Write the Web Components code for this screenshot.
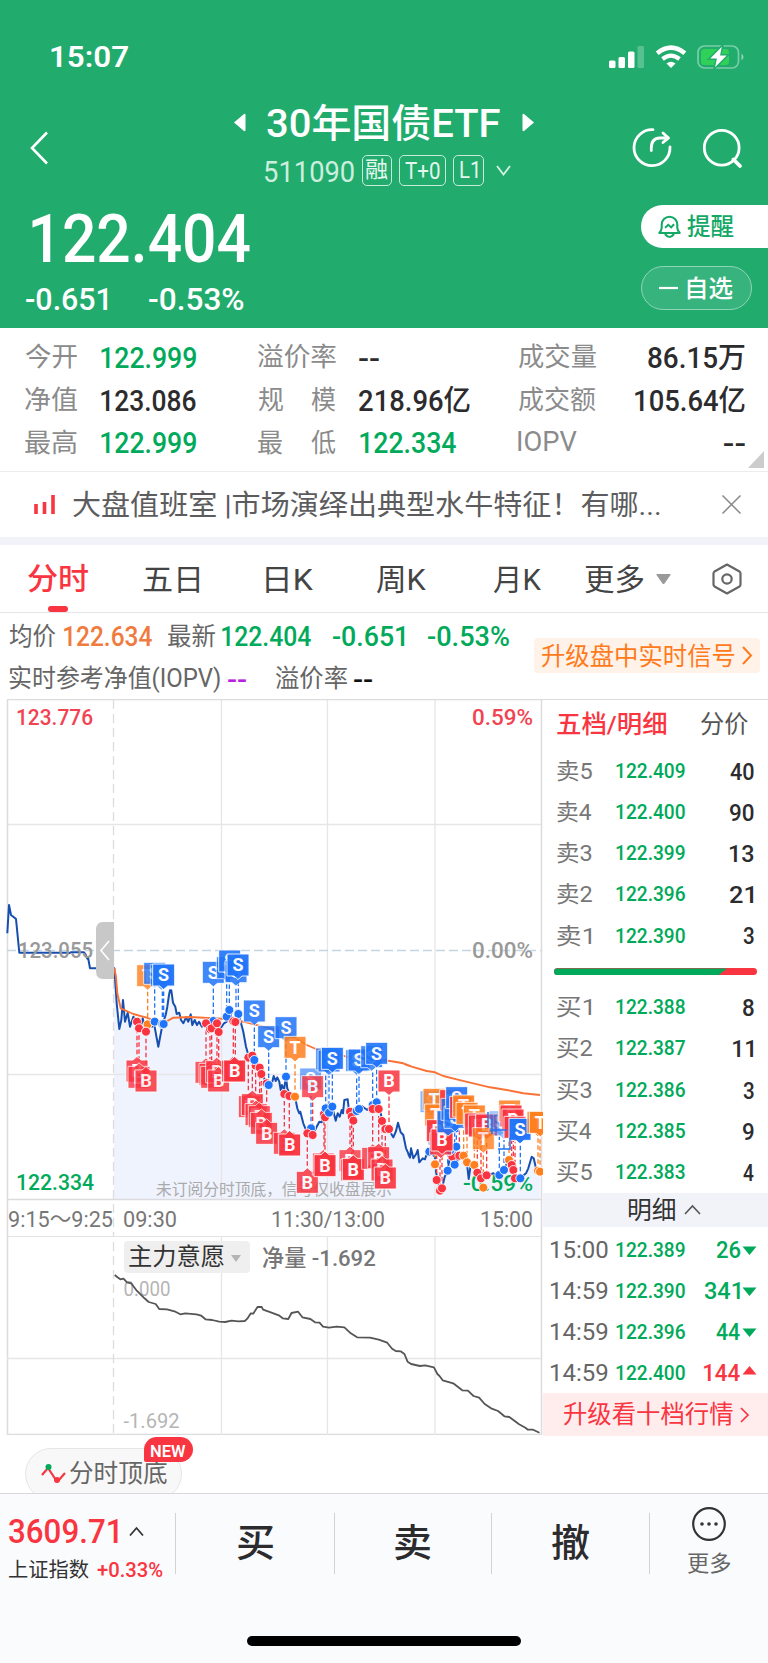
<!DOCTYPE html>
<html lang="zh-CN"><head><meta charset="utf-8"><title>30年国债ETF</title>
<style>html,body{margin:0;padding:0;background:#fff}body{width:768px;height:1663px;overflow:hidden;font-family:Roboto,"Noto Sans CJK SC",sans-serif}</style>
</head><body><quote-page></quote-page>
<script>
const FONT='Roboto, "Noto Sans CJK SC", sans-serif';
const ctx=document.createElement('canvas').getContext('2d');
const G='#00aa5a',R='#f93541',K='#2c2c2e',M='#666',L='#8b8b8b';
/* shorthand for a text with a set ink width: text, width, size, colour, gap before, weight, vertical nudge */
const T=(t,w,s,c='inherit',g=0,wt=400,dy=0)=>`<fit-text w="${w}" s="${s}" c="${c}" g="${g}" wt="${wt}" dy="${dy}">${t}</fit-text>`;
const svg=(w,h,body,g=0,extra='')=>`<svg width="${w}" height="${h}" viewBox="0 0 ${w} ${h}" fill="none" style="margin-left:${g}px;flex:none;overflow:visible;${extra}">${body}</svg>`;

customElements.define('fit-text',class extends HTMLElement{
  connectedCallback(){
    if(this.shadowRoot)return;
    const a=n=>this.getAttribute(n),t=this.textContent,s=+a('s'),w=+a('w'),wt=a('wt');
    ctx.font=`${wt} ${s}px ${FONT}`;
    const m=ctx.measureText(t),k=w/(m.actualBoundingBoxRight+m.actualBoundingBoxLeft);
    this.attachShadow({mode:'open'}).innerHTML=`<style>
      :host{display:block;flex:none;width:${w}px;height:${s}px;margin-left:${a('g')}px;color:${a('c')};white-space:nowrap}
      span{display:inline-block;font:${wt} ${s}px/${s}px ${FONT};transform-origin:0 50%;transform:translate(${m.actualBoundingBoxLeft*k}px,${a('dy')}px) scaleX(${k})}
      </style><span><slot></slot></span>`;
  }
});
const def=(name,css,html)=>customElements.define(name,class extends HTMLElement{
  connectedCallback(){
    if(this.shadowRoot)return;
    this.attachShadow({mode:'open'}).innerHTML=`<style>*{box-sizing:border-box}.r{display:flex;align-items:center}${css}</style>`+(typeof html==='function'?html(this):html);
  }
});

def('status-bar',':host{display:block;height:94px;padding-top:40px;color:#fff}.r{height:34px;padding-left:51px}',
`<div class="r">${T('15:07',77,30,'#fff',0,600)}
${svg(35,22,'<rect y="14.500" width="6.500" height="7.500" rx="1.500" fill="#fff"/><rect x="9.500" y="11" width="6.500" height="11" rx="1.500" fill="#fff"/><rect x="19" y="5.500" width="6.500" height="16.500" rx="1.500" fill="#fff"/><rect x="28.500" width="6.500" height="22" rx="1.500" fill="#fff" opacity=".25"/>',481)}
${svg(32,22,'<path d="M2.200 7.300Q16-4 29.800 7.300" stroke="#fff" stroke-width="4.700"/><path d="M7.500 13Q16 6.200 24.500 13" stroke="#fff" stroke-width="4.200"/><path d="M16 22l-4.500-4.500q4.500-3.500 9 0z" fill="#fff"/>',11)}
${svg(48,24,'<rect x="1" y="1" width="40.500" height="22" rx="6.500" stroke="#fff" stroke-opacity=".4" stroke-width="1.700"/><rect x="4" y="4" width="28" height="16" rx="3.500" fill="#30d158"/><path d="M44.500 8.500q4 3.500 0 7z" fill="#fff" opacity=".5"/><path d="M26-.5L11.500 14.300h7.500L16.800 24.500 31.500 9.700H24z" fill="#fff" stroke="#21ac6e" stroke-width="1.500"/>',10)}
</div>`);

def('title-bar',`:host{display:grid;grid-template-columns:230px 310px 1fr;height:106px;color:#fff}
.back{padding:37px 0 0 30px}.t{height:56px;padding-left:3px}.s{height:40px;padding-left:35px;margin-top:0}.b{display:flex;align-items:center;justify-content:center;height:31px;border:1.500px solid #c8eadb;border-radius:5px;margin-left:7px}.i{padding:34px 0 0 93px;display:flex;gap:32px}`,
`<div class="back">${svg(18,34,'<path d="M17 1.500L2 17l15 15.500" stroke="#fff" stroke-width="2.600"/>')}</div>
<div><div class="r t">${svg(13,19,'<path d="M1 9.500L11 1q1.500-.6 1.500 1v15q0 1.600-1.500 1z" fill="#fff"/>')}${T('30年国债ETF',233,39,'#fff',21,500,2)}${svg(13,19,'<path d="M12 9.500L2 1Q.5.400.5 2v15q0 1.600 1.500 1z" fill="#fff"/>',22)}</div>
<div class="r s">${T('511090',89,29,'#cdeede',0,400,2)}<div class="b" style="width:30px;margin-left:8px">${T('融',22,22,'#e4f6ed')}</div><div class="b" style="width:47px">${T('T+0',35,24,'#e4f6ed',0,400,1)}</div><div class="b" style="width:31px">${T('L1',18,23,'#e4f6ed')}</div>${svg(15,11,'<path d="M1 1l6.500 8.500L14 1" stroke="#d9f1e6" stroke-width="1.800"/>',12)}</div></div>
<div class="i">${svg(39,40,'<path d="M20 1.700A18 18 0 1 0 37 19" stroke="#fff" stroke-width="2.800" stroke-linecap="round"/><path d="M18.300 22.500V20Q18.300 10.200 27 10H34M30 5l5.500 5L30 14.500" stroke="#fff" stroke-width="2.800" stroke-linecap="round" stroke-linejoin="round"/>')}${svg(39,40,'<circle cx="17.700" cy="19.700" r="17.400" stroke="#fff" stroke-width="2.800"/><path d="M29.500 31.500l6.500 6.500" stroke="#fff" stroke-width="3.800" stroke-linecap="round"/>')}</div>`);

def('price-head',`:host{display:grid;grid-template-columns:1fr 127px;height:128px;color:#fff}.p{height:76px;padding-left:32px}.c{height:46px;padding-left:26px}
.btn{display:flex;align-items:center}.a{margin-top:5px;height:43px;background:#fff;border-radius:22px 0 0 22px;padding-left:17px}.z{margin-top:17.500px;width:110.500px;height:44px;border:1.500px solid #8fd4b5;background:#37b47d;border-radius:22px;padding-left:17px}`,
`<div><div class="r p">${T('122.404',218,67,'#fff',0,500,1)}</div><div class="r c">${T('-0.651',81,32,'#fff',0,500)}${T('-0.53%',95,32,'#fff',42,500)}</div></div>
<div><div class="btn a">${svg(23,24,'<path d="M1.300 18h20.400Q19.500 15.500 19.300 13V9.500a7.800 7.800 0 0 0-15.600 0V13Q3.500 15.500 1.300 18zM7 19q4.500 6 9 0" stroke="#14a866" stroke-width="2.100" stroke-linejoin="round"/><path d="M7 12.800l3.300-3 2.800 2.600 3-3.200" stroke="#14a866" stroke-width="2"/>')}${T('提醒',47,24,'#14a866',6,500)}</div>
<div class="btn z">${svg(19,4,'<path d="M0 2h19" stroke="#fff" stroke-width="2.200"/>')}${T('自选',46,24,'#fff',9,500,1)}</div></div>`);

def('stat-grid',`:host{display:block;height:143.500px;padding-top:8px;border-bottom:1.500px solid #ececee;position:relative}.r{height:42.700px;padding-left:25px}svg.c{position:absolute;right:4px;bottom:3px}`,
(()=>{const row=(a,v,c,l2,v2,l3,v3)=>`<div class="r">${T(a,52,26,L,0,400,-.5)}${T(v,95,29,c,24,500,1)}${l2}${v2}${l3}${v3}</div>`;
const l=(t,g)=>T(t,78,26,L,g,400,-.5),sp=(x,y)=>T(x,25,26,L,62,400,-.5)+T(y,25,26,L,28,400,-.5);
return row('今开','122.999',G,l('溢价率',62),T('--',20,29,K,23,500,2),l('成交量',139),T('86.15万',97,29,K,52,500,1))
+row('净值','123.086',K,sp('规','模'),T('218.96亿',111,29,K,23,500,1),l('成交额',48),T('105.64亿',110,29,K,39,500,1))
+row('最高','122.999',G,sp('最','低'),T('122.334',96,29,G,24,500,1),T('IOPV',59,28,L,62,400,-1),T('--',21,29,K,147,500,2))
+'<svg class="c" width="16" height="17"><path d="M16 0v17H0z" fill="#ccc"/></svg>'})());

def('news-line',`:host{display:flex;align-items:center;height:73.500px;border-bottom:8px solid #f2f3f8;padding-left:34px}`,
svg(21,19,'<path d="M2 9v10M10.500 7v12M19 0v19" stroke="#f93541" stroke-width="3.600"/>')+T('大盘值班室 |市场演绎出典型水牛特征！有哪...',587,28.5,'#5c5c5e',18,400,2)+svg(19,19,'<path d="M.5.500l18 18M18.500.500l-18 18" stroke="#8a8a8a" stroke-width="1.500"/>',62));

def('period-tabs',`:host{display:block;height:67.500px;border-bottom:1.500px solid #e6e6e8}.r{height:61px;padding:6px 0 0 28px}i{display:block;width:20px;height:6px;border-radius:3px;background:#f93541;margin-left:48px}`,
`<div class="r">${T('分时',60,30,R,0,500)}${T('五日',56,30,'#444',55,400,1)}${T('日K',47,30,'#444',67,400,1)}${T('周K',50,30,'#444',63,400,1)}${T('月K',48,30,'#444',67,400,1)}${T('更多',59,30,'#444',44,400,.5)}${svg(15,10,'<path d="M1 0h13q1 0 .5 1L8.500 9.500q-1 1-2 0L.5 1Q0 0 1 0z" fill="#999"/>',12)}${svg(30,32,'<path d="M15 1.500L27.500 8.500q1 .8 1 2v11q0 1.200-1 2L15 30.500 2.500 23.500q-1-.8-1-2v-11q0-1.200 1-2z" stroke="#666" stroke-width="2.200" stroke-linejoin="round"/><circle cx="15" cy="16" r="4.700" stroke="#666" stroke-width="2.200"/>',41)}</div><i></i>`);

def('quote-info',`:host{display:grid;grid-template-columns:534px 226px;height:86px}.a{height:47px;padding-left:9px}.b{height:36px;padding-left:9px}.u{align-self:start;margin-top:25px;height:35px;background:#fff3e9;border-radius:4px;padding-left:7px}`,
`<div><div class="r a">${T('均价',47,25,M)}${T('122.634',88,27,'#f07b3f',8,500,1)}${T('最新',47,25,M,16)}${T('122.404',89,27,G,7,500,1)}${T('-0.651',72,27,G,22,500,1)}${T('-0.53%',81,27,G,23,500,1)}</div>
<div class="r b">${T('实时参考净值(IOPV)',211,25,M,0,400,1)}${T('--',19,27,'#b91fe0',8,500,3)}${T('溢价率',72,25,M,28,400,1)}${T('--',19,27,'#111',7,500,3)}</div></div>
<div class="r u">${T('升级盘中实时信号',194,25,'#ff7a1c',0,400,1)}${svg(10,19,'<path d="M1 1l8 8.500L1 18" stroke="#ff7a1c" stroke-width="2"/>',7)}</div>`);

const flat=(ox,oy,a)=>a.trim().split(/\s+/).map(p=>{const[x,y]=p.split(',');return (ox+x/3).toFixed(1)+','+(oy+y/3).toFixed(1)}).join(' ');
const Z4=[0,880],Z5=[190,930],Z6=[390,1030],Z7=[420,1070];
const price=flat(...Z4,'343,265 350,370 358,447 364,420 369,360 375,425 383,398 390,440 400,410 412,425 420,450 428,415 437,455 445,425 456,440 462,430 475,500 488,430 497,405 502,380 507,345 510,331 514,331 519,368 526,380 530,402 538,398 543,420 550,430 558,412 565,425 572,403 577,435 584,420 591,435 597,425 606,440 612,425 625,430 640,425 650,442 660,448 672,430 680,425 690,395 696,420 708,408 718,410 730,455 738,500 748,535 757,525 770,550 785,580 795,600 806,615 812,618 817,605 821,588 827,603 832,592 838,605')+' '
+flat(...Z5,'272,480 276,465 282,480 288,440 292,475 300,495 315,500 322,535 328,550 331,545 340,580 348,600 362,600 370,612 380,590 388,575 395,577 402,555 415,550 427,530 437,572 443,550 449,560 455,540 459,550 463,510 473,508 476,535 484,550 490,572 500,545 515,528 532,540 545,522 552,540 560,510 568,530 577,572 587,590 600,605 610,622 618,603 624,578 632,607 640,615 648,655 655,670')+' '
+flat(...Z6,'55,372 60,383 63,355 70,385 78,373 83,360 88,397 98,385 105,388 108,378 120,367 135,380 138,425 143,450 150,482 156,475 164,440 172,425 180,380 190,350 200,395 210,378 218,383 227,398 232,410 236,447 242,405 252,405 260,425 268,448 278,430 290,437 310,430 325,437 345,410 358,392 368,420 375,440 390,445 408,430 415,415 425,380 431,385 438,415 450,425');
const avg=flat(...Z4,'343,265 348,290 352,340 362,385 400,402 440,413 470,425 500,424 520,413 570,411 680,417')+' '+flat(...Z5,'160,275 260,300 300,315 340,338 350,345 378,357 470,380 600,393 640,400 660,408')+' '+flat(...Z6,'45,103 65,110 110,123 135,127 160,138 200,148 250,160 300,172 350,180 400,190 450,195');
/* marker list: kind (D is a B flag that points down), flag centre, dot centre, opacity */
const marks=[[Z4,`T 443,287 443,433 .8|S 464,280 464,425 .8|S 484,287 487,432 .6|S 491,285 491,432 .95|S 640,277 640,423 .85|S 682,263 680,410 .8|S 689,243 688,390 .9|S 708,275 708,424 .85|S 714,255 715,402 .95
|B 411,573 411,425 .85|B 417,592 417,445 .8|B 438,603 438,455 .85|B 618,577 618,430 .8|B 630,583 630,447 .8|B 635,592 635,445 .8|B 650,575 651,430 .8|B 656,603 656,456 .85|B 698,573 700,424 .8|B 704,573 706,426 .95|B 748,680 745,533 .8|B 757,674 757,527 .85|B 768,704 767,557 .8|B 778,710 779,563 .8|B 784,730 784,582 .85|B 800,760 800,610 .85|S 763,393 763,540 .85|S 806,470 806,615 .85`],
[Z5,`S 288,293 288,440 .85|B 283,640 283,492 .8|B 299,645 298,498 .95|T 315,352 315,500 .85|S 362,447 363,595 .6|B 352,757 352,610 .85|D 368,470 368,615 .8|B 400,702 402,552 .8|B 405,707 405,562 .95|S 410,387 407,535 .8|S 417,393 417,548 .8|S 427,385 427,530 .95|B 480,692 480,545 .8|B 485,720 485,560 .8|B 490,718 490,572 .95|S 500,392 500,543 .8|S 507,390 507,537 .85|S 545,380 548,525 .8|S 560,370 560,517 .9|B 548,685 548,537 .8|B 566,683 566,537 .85|B 576,720 576,573 .85|B 586,744 586,597 .9|D 597,453 597,597 .85`],
[Z7,`S 33,95 28,245 .5|T 42,88 45,283 .85|T 47,135 45,283 .9|D 52,182 50,330 .9|D 62,222 60,362 .85|D 66,210 66,355 .97|D 92,92 97,260 .85|S 84,155 83,302 .9|S 96,118 90,242 .8|S 105,142 104,284 .85|S 110,83 109,230 .9|D 122,112 118,257 .9|T 131,108 131,257 .92|T 141,130 141,277 .9|T 163,138 163,285 .9|D 167,162 172,308 .9|D 178,168 183,325 .9|D 200,165 200,316 .92|T 190,206 190,353 .8|S 240,155 238,315 .4|S 252,165 252,300 .4|T 269,123 267,270 .85|D 273,138 275,285 .9|D 279,150 280,300 .9|D 285,172 285,325 .9|S 300,178 301,325 .97|T 354,157 354,302 .85|T 361,157 360,305 .92`]];
const mark=([o,s])=>{const list=s.split('|').map(e=>{const[k,b,d,al]=e.trim().split(' ');const[x,y]=b.split(',').map((v,i)=>o[i]+v/3),[p,q]=d.split(',').map((v,i)=>o[i]+v/3);return{k,x,y,p,q,al,c:k=='S'?'#1f74fa':k=='T'?'#ff7f1f':'#f9333f'}});
 return list.map(m=>`<path d="M${m.p} ${m.q}V${m.y+(m.k=='B'?-15:15)}" stroke="${m.c}" stroke-width="1.300" stroke-dasharray="4.500 2.500"/>`).join('')
 +list.map(m=>`<circle cx="${m.p}" cy="${m.q}" r="4.500" fill="${m.c}" stroke="#fff" stroke-width=".9"/>`).join('')
 +list.map(m=>{const up=m.k=='B';return `<g transform="translate(${m.x} ${m.y})" opacity="${m.al}"><path d="${up?'M-11-11H-4L0-14.500 4-11H11V11H-11Z':'M-11-11H11V11H4L0 14.500-4 11H-11Z'}" fill="${m.c}" stroke="#fff" stroke-width=".9"/><text text-anchor="middle" y="6.300" font-size="18" font-weight="700" fill="#fff">${m.k=='D'?'B':m.k}</text></g>`}).join('')};
const tx=(t,x,y,w,s,c,wt=500)=>`<text x="${x}" y="${y+s*.355}" textLength="${w}" lengthAdjust="spacingAndGlyphs" font-size="${s}" fill="${c}" font-weight="${wt}">${t}</text>`;

def('minute-chart',`:host{display:block;height:538px}svg{display:block;font-family:${FONT}}`,
()=>`<svg width="543" height="538" viewBox="0 699 543 538" fill="none">
<path d="M114 968L${price} 540,1199 114,1199Z" fill="#eff3fe"/>
<path d="M7 824.500H541M7 1074.500H541M221.500 700V1199M327.500 700V1199M435 700V1199" stroke="#e6e6e8" stroke-width="1.300"/>
<path d="M7 699.500H543M7.500 700V1237M541.500 700V1237M7 1199.500H541M7 1237H541" stroke="#dcdce0" stroke-width="1.500"/>
<path d="M113.500 700V1237" stroke="#ddd" stroke-width="1.300" stroke-dasharray="9 5"/><path d="M7 950.500H541" stroke="#c5d6e3" stroke-width="1.300" stroke-dasharray="9 4"/>
<polyline points="${flat(...Z4,'22,160 27,75 33,105 40,110 48,117 58,218 204,218 206,220 212,217 252,217 256,222 262,236 264,232 270,265 343,265')} ${price}" stroke="#174fb0" stroke-width="2" stroke-linejoin="round"/>
<polyline points="${avg}" stroke="#fa7236" stroke-width="1.900" stroke-linejoin="round"/>
<path d="M114 922V979H103Q96 979 96 971V930Q96 922 103 922Z" fill="#c8c8c8"/><path d="M109 941l-8 9.500 8 9.500" stroke="#fff" stroke-width="1.600"/>
${tx('未订阅分时顶底，信号仅收盘展示',156,1189,236,15.6,'#aaa',400)}
${tx('123.776',16,717.5,77,21.500,'#f24352')}${tx('0.59%',472,717.5,61,21.500,'#f24352')}${tx('123.055',18,950.500,75,21.500,'#999')}${tx('0.00%',472,950.500,61,21.500,'#999')}${tx('122.334',16,1182.500,78,21.500,G)}${tx('-0.59%',463,1183,70,22,G)}
${marks.map(mark).join('')}
<path d="M490.500 1130H507M492 1134V1115M498 1149H510V1138M488 1128V1112" stroke="#1f74fa" stroke-width="1.500"/>
${tx('9:15～9:25',8,1219.500,105,22.5,'#777',400)}${tx('09:30',123,1219.500,54,22.5,'#777',400)}${tx('11:30/13:00',271,1219.500,114,22.5,'#777',400)}${tx('15:00',480,1219.500,53,22.5,'#777',400)}
</svg>`);
const will='327,255 335,262 343,268 352,266 362,277 374,280 390,302 412,325 424,336 444,342 454,357 476,358 500,365 514,373 528,370 560,373 574,377 586,388 605,390 625,395 642,396 660,392 680,394 698,393 705,386 715,370 722,371 734,351 746,351 750,359 772,367 795,376 806,385 822,387 831,369 850,365 862,382 885,387 898,397 911,398 921,410 938,413 960,410 982,412 1000,430 1018,442 1055,443 1080,449 1104,458 1118,476 1128,483 1142,484 1153,492 1162,515 1172,522 1197,528 1212,526 1237,532 1247,552 1253,558 1262,571 1292,580 1318,601 1334,602 1350,618 1366,623 1382,642 1400,655 1420,663 1438,679 1452,681 1480,703 1498,713 1505,719 1520,719 1538,728'.split(' ').map(p=>{const[x,y]=p.split(',');return (x/2.851).toFixed(1)+','+(1190+y/3).toFixed(1)}).join(' ');
def('will-chart',`:host{display:grid;grid-template:198px/543px;height:198px}svg.g,.o{grid-area:1/1}svg.g{display:block;font-family:${FONT}}.o{display:flex;align-items:flex-start;padding:4.500px 0 0 124px}.k{width:126px;height:32px;background:#efefef;border-radius:4px;padding-left:5px}.v{height:32px}`,
`<svg class="g" width="543" height="198" viewBox="0 1237 543 198" fill="none"><path d="M7.500 1237V1435M541.500 1237V1435M7 1434.500H542" stroke="#dcdce0" stroke-width="1.500"/><path d="M7 1358.500H541M221.500 1237V1435M327.500 1237V1435M435 1237V1435" stroke="#e6e6e8" stroke-width="1.300"/><path d="M113.500 1242V1435" stroke="#ddd" stroke-width="1.300" stroke-dasharray="9 5"/>
${tx('0.000',123.5,1289,47,20,'#b5b5b5',400)}${tx('-1.692',123.5,1420.500,56,20,'#b5b5b5',400)}<polyline points="${will}" stroke="#555" stroke-width="1.800" stroke-linejoin="round"/></svg>
<div class="o"><div class="r k">${T('主力意愿',95,24,'#333')}${svg(10,7,'<path d="M0 0h10L5 7z" fill="#b5b5b5"/>',7,'margin-top:2px')}</div><div class="r v">${T('净量 -1.692',113,22.5,'#777',12,500,.5)}</div></div>`);

def('order-book',`:host{display:block;height:736px;border-top:1.500px solid #dcdce0}.h{height:51px;padding-left:14px}.q{display:grid;grid-template-columns:59px 69px 1fr;align-items:center;height:41.200px;padding:0 14px 0 13.500px}.e{display:flex;justify-content:flex-end;align-items:center}
.bar{display:grid;height:7px;margin:12px 11px 11.500px 11px;border-radius:4px;background:#f93541;overflow:hidden}.bar i{width:173px;background:#00aa5a;clip-path:polygon(0 0,100% 0,164px 100%,0 100%)}.m{height:34px;background:#f2f3f9;padding-left:85px}.t{padding:0 11px 0 7.500px;grid-template-columns:65px 69px 1fr}.ts{padding-top:1.500px}.u{height:43px;background:#ffedee;padding-left:20px}`,
(()=>{const ln=(n,p,q)=>`<div class="q">${T(n,35,22.500,'#777')}${T('122.'+p,69,20.5,G,0,500)}<div class="e">${T(q,q.length*11.800-(q=='11'?3:q.length==2?0:1),24.8,K,0,500,.5)}</div></div>`;
const tk=(t,p,q,up)=>`<div class="q t">${T(t,57,24.5,'#666',0,400,.5)}${T('122.'+p,69,20.5,G,0,500,.5)}<div class="e">${T(q,q.length*12.100,24.5,up?R:G,0,500,.5)}${svg(15,9,up?'<path d="M.5 8.500L7.500 0l7 8.500z" fill="#f93541"/>':'<path d="M.5.500L7.500 9l7-8.500z" fill="#00aa5a"/>',2,up?'margin-bottom:5px':'margin-top:3px')}</div></div>`;
return `<div class="r h">${T('五档/明细',109,24.5,R,0,500)}${T('分价',47,24.5,'#555',35)}</div>`
+[['卖5','409','40'],['卖4','400','90'],['卖3','399','13'],['卖2','396','21'],['卖1','390','3']].map(a=>ln(...a)).join('')+'<div class="bar"><i></i></div>'
+[['买1','388','8'],['买2','387','11'],['买3','386','3'],['买4','385','9'],['买5','383','4']].map(a=>ln(...a)).join('')
+`<div class="r m">${T('明细',47,24.5,'#333',0,400,1)}${svg(17,10,'<path d="M1 9l7.500-8L16 9" stroke="#555" stroke-width="1.600"/>',9)}</div><div class="ts">`
+tk('15:00','389','26')+tk('14:59','390','341')+tk('14:59','396','44')+tk('14:59','400','144',1)
+`</div><div class="r u">${T('升级看十档行情',170,24.5,R,0,400,1)}${svg(9,16,'<path d="M1 1l7 7-7 7" stroke="#f93541" stroke-width="1.700"/>',7)}</div>`})());

def('signal-strip',`:host{display:block;height:58px;padding:13px 0 0 25px;overflow:hidden}.p{position:relative;width:157px;height:52px;border:1.500px solid #e6e6e6;border-radius:26px;background:#f8f8f8;padding-left:15px}.n{position:absolute;left:118px;top:-12px;width:49px;height:25px;background:#f93541;border-radius:13px 13px 13px 2px;display:flex;align-items:center;justify-content:center}`,
`<div class="r p">${svg(25,20,'<path d="M1 11l6-7 8 12 3 0 6-7" stroke="#f93541" stroke-width="2.200"/><circle cx="7.500" cy="3" r="3" fill="#00aa5a"/><circle cx="16" cy="16" r="3" fill="#f93541"/>')}${T('分时顶底',97,24.5,'#666',4,400,1)}<div class="n">${T('NEW',35,16.5,'#fff',0,600,.5)}</div></div>`);

def('trade-bar',`:host{display:block;height:170px;background:#fafbfd;border-top:1.500px solid #d8d8da}.g{display:grid;grid-template-columns:175px 159px 157px 158px 1fr;grid-template-rows:61px;height:61px;margin-top:19px}.c{display:flex;align-items:center;justify-content:center;height:61px;border-left:1.500px solid #d2d2d4}.x{padding-left:9px}.l{height:34px}.m{height:40px}.o{display:flex;flex-direction:column;align-items:center;height:61px;border-left:1.500px solid #d2d2d4;gap:12px}.o svg{margin-top:-6px}.home{width:274px;height:10px;background:#000;border-radius:5px;margin:62px 0 0 247px}`,
`<div class="g"><div class="x"><div class="r l" style="padding-top:4px">${T('3609.71',109,33,R,0,500)}${svg(15,9,'<path d="M1 8.500L7.500 1 14 8.500" stroke="#333" stroke-width="1.800"/>',11)}</div><div class="r m" style="padding-top:6px">${T('上证指数',80,20,'#333',0,400)}${T('+0.33%',66,20.5,R,8,500,1)}</div></div>
<div class="c">${T('买',36,38,K,0,500)}</div><div class="c">${T('卖',36,38,K,0,500)}</div><div class="c">${T('撤',37,38,K,0,500)}</div>
<div class="o"><svg width="34" height="34" fill="none" style="flex:none"><circle cx="17" cy="17" r="15.800" stroke="#333" stroke-width="2.200"/><g fill="#333"><circle cx="10" cy="17" r="1.800"/><circle cx="17" cy="17" r="1.800"/><circle cx="24" cy="17" r="1.800"/></g></svg>${T('更多',43,21.5,'#666')}</div></div><div class="home"></div>`);

def('quote-page',`:host{display:block;width:768px;height:1663px;background:#fff}header{background:#21ac6e;height:328px}main{display:grid;grid-template-columns:543px 225px}`,
`<header><status-bar></status-bar><title-bar></title-bar><price-head></price-head></header><stat-grid></stat-grid><news-line></news-line><period-tabs></period-tabs><quote-info></quote-info>
<main><div><minute-chart></minute-chart><will-chart></will-chart></div><order-book></order-book></main><signal-strip></signal-strip><trade-bar></trade-bar>`);
</script></body></html>
